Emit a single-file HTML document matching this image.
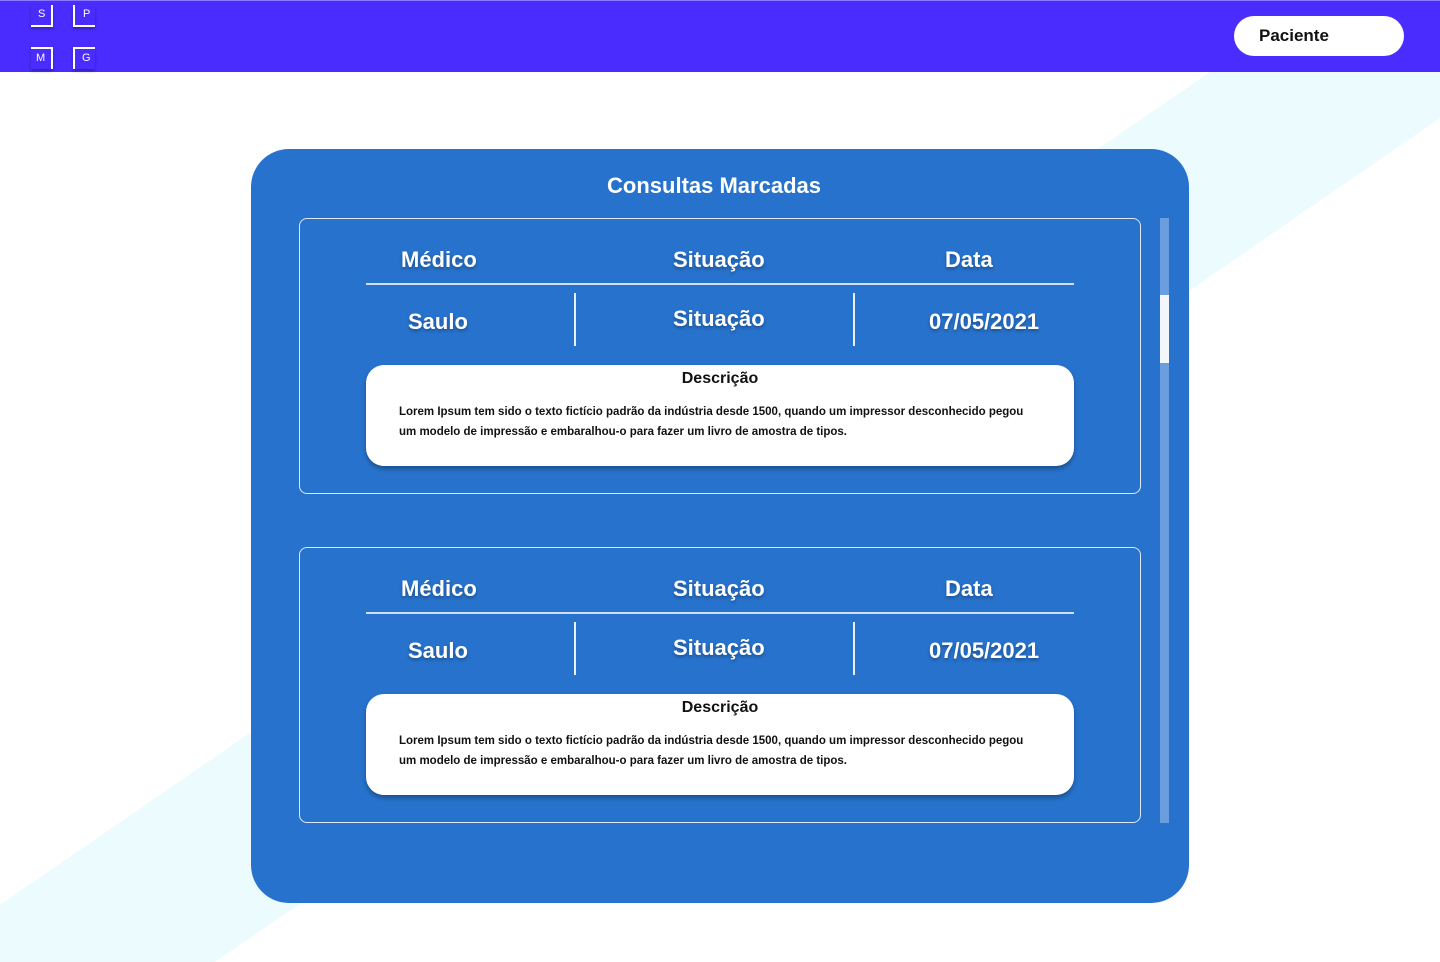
<!DOCTYPE html>
<html><head><meta charset="utf-8"><style>
*{margin:0;padding:0;box-sizing:border-box}
body{width:1440px;height:962px;position:relative;overflow:hidden;background:#fff;font-family:"Liberation Sans",sans-serif}
.bg{position:absolute;left:0;top:0}
.nav{position:absolute;left:0;top:0;width:1440px;height:72px;background:#4a2cff;border-top:1px solid #8a7aff}
.lg{position:absolute;width:22px;height:22px;color:#fff;font-size:11px;box-shadow:0 2px 3px rgba(0,0,0,.3)}
.btn{position:absolute;left:1234px;top:15px;width:170px;height:40px;background:#fff;border-radius:20px;font-weight:bold;font-size:17px;line-height:40px;padding-left:25px;color:#111}
.panel{position:absolute;left:251px;top:149px;width:938px;height:754px;background:#2772cc;border-radius:38px}
.title{position:absolute;top:24px;left:0;width:926px;text-align:center;color:#fff;font-weight:bold;font-size:22px}
.card{position:absolute;left:48px;width:842px;height:276px;border:1px solid #dfe9f7;border-radius:8px}
.h{position:absolute;color:#fff;font-weight:bold;font-size:22px;text-shadow:0 2px 3px rgba(0,0,0,.3)}
.hl{position:absolute;left:66px;top:64px;width:708px;height:2px;background:#cfe0f5}
.vl{position:absolute;width:2px;height:53px;top:74px;background:#e8f0fb}
.desc{position:absolute;left:66px;top:146px;width:708px;height:101px;background:#fff;border-radius:18px;box-shadow:0 3px 5px rgba(0,0,0,.3)}
.desc b{display:block;text-align:center;font-size:16px;margin-top:5px;color:#111}
.desc p{font-size:11.5px;font-weight:bold;line-height:20px;margin:14px 0 0 33px;color:#111}
.sb{position:absolute;left:909px;top:69px;width:9px;height:605px;background:#6a9edf}
.th{position:absolute;left:909px;top:146px;width:9px;height:68px;background:#f3f6fb}
</style></head><body>
<svg class="bg" width="1440" height="962"><polygon points="1210,72 1440,72 1440,118 215,962 0,962 0,905" fill="#ebfbfe"/></svg>
<div class="nav">
<div class="lg" style="left:31px;top:4px;border-right:2px solid #fff;border-bottom:2px solid #fff;padding:3px 0 0 7px">S</div>
<div class="lg" style="left:73px;top:4px;border-left:2px solid #fff;border-bottom:2px solid #fff;padding:3px 0 0 8px">P</div>
<div class="lg" style="left:31px;top:46px;border-right:2px solid #fff;border-top:2px solid #fff;padding:3px 0 0 5px">M</div>
<div class="lg" style="left:73px;top:46px;border-left:2px solid #fff;border-top:2px solid #fff;padding:3px 0 0 7px">G</div>
<div class="btn">Paciente</div>
</div>
<div class="panel">
<div class="title">Consultas Marcadas</div>
<div class="card" style="top:69px">
<div class="h" style="left:101px;top:28px">Médico</div><div class="h" style="left:373px;top:28px">Situação</div><div class="h" style="left:645px;top:28px">Data</div>
<div class="hl"></div><div class="vl" style="left:274px"></div><div class="vl" style="left:553px"></div>
<div class="h" style="left:108px;top:90px">Saulo</div><div class="h" style="left:373px;top:87px">Situação</div><div class="h" style="left:629px;top:90px">07/05/2021</div>
<div class="desc"><b>Descrição</b><p>Lorem Ipsum tem sido o texto fictício padrão da indústria desde 1500, quando um impressor desconhecido pegou<br>um modelo de impressão e embaralhou-o para fazer um livro de amostra de tipos.</p></div>
</div>
<div class="card" style="top:398px">
<div class="h" style="left:101px;top:28px">Médico</div><div class="h" style="left:373px;top:28px">Situação</div><div class="h" style="left:645px;top:28px">Data</div>
<div class="hl"></div><div class="vl" style="left:274px"></div><div class="vl" style="left:553px"></div>
<div class="h" style="left:108px;top:90px">Saulo</div><div class="h" style="left:373px;top:87px">Situação</div><div class="h" style="left:629px;top:90px">07/05/2021</div>
<div class="desc"><b>Descrição</b><p>Lorem Ipsum tem sido o texto fictício padrão da indústria desde 1500, quando um impressor desconhecido pegou<br>um modelo de impressão e embaralhou-o para fazer um livro de amostra de tipos.</p></div>
</div>
<div class="sb"></div><div class="th"></div>
</div>
</body></html>
